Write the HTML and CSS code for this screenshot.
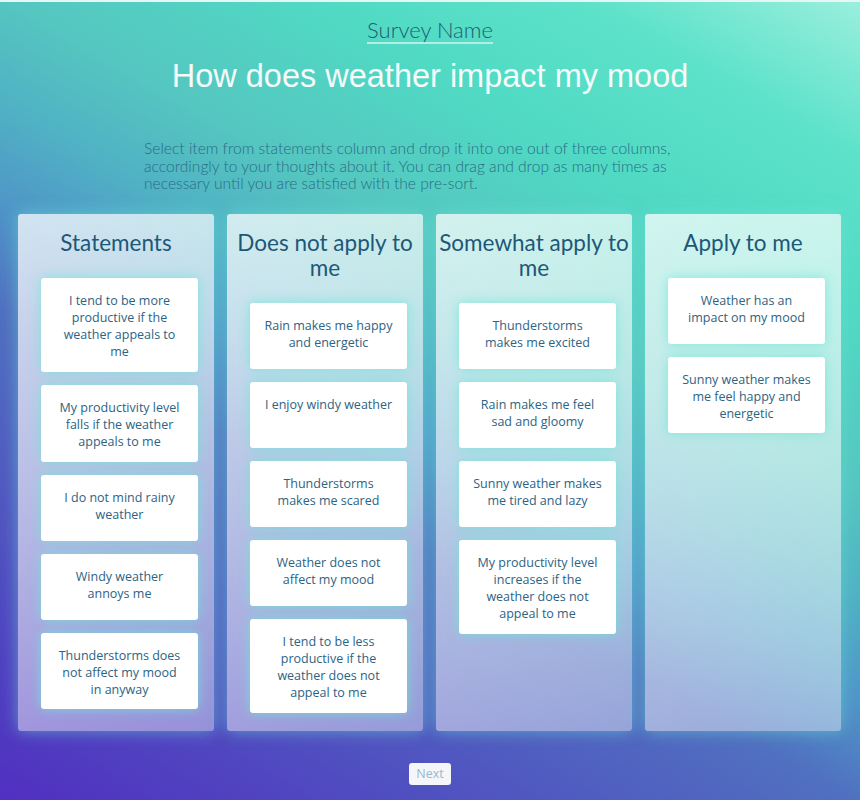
FILE: index.html
```html
<!DOCTYPE html>
<html lang="en">
<head>
<meta charset="utf-8">
<title>How does weather impact my mood</title>
<link rel="stylesheet" href="styles.css">
</head>
<body>
<div class="page">
  <header class="header">
    <div class="survey-row"><span class="survey-name">Survey Name</span></div>
    <h1 class="title">How does weather impact my mood</h1>
    <p class="instructions">Select item from statements column and drop it into one out of three columns, accordingly to your thoughts about it. You can drag and drop as many times as necessary until you are satisfied with the pre-sort.</p>
  </header>
  <main class="board">
    <section class="column">
      <h2 class="col-title">Statements</h2>
      <div class="cards">
        <div class="card">I tend to be more productive if the weather appeals to me</div>
        <div class="card">My productivity level falls if the weather appeals to me</div>
        <div class="card">I do not mind rainy weather</div>
        <div class="card">Windy weather annoys me</div>
        <div class="card">Thunderstorms does not affect my mood in&nbsp;anyway</div>
      </div>
    </section>
    <section class="column">
      <h2 class="col-title">Does not apply to me</h2>
      <div class="cards">
        <div class="card">Rain makes me happy and energetic</div>
        <div class="card">I enjoy windy weather</div>
        <div class="card">Thunderstorms makes me scared</div>
        <div class="card">Weather does not affect my mood</div>
        <div class="card">I tend to be less productive if the weather does not appeal to me</div>
      </div>
    </section>
    <section class="column">
      <h2 class="col-title">Somewhat apply to me</h2>
      <div class="cards">
        <div class="card">Thunderstorms makes me excited</div>
        <div class="card">Rain makes me feel sad and gloomy</div>
        <div class="card">Sunny weather makes me tired and lazy</div>
        <div class="card">My productivity level increases if the weather does not appeal to me</div>
      </div>
    </section>
    <section class="column">
      <h2 class="col-title">Apply to me</h2>
      <div class="cards">
        <div class="card">Weather has an impact on my mood</div>
        <div class="card">Sunny weather makes me feel happy and energetic</div>
      </div>
    </section>
  </main>
  <div class="footer"><button class="next-btn" type="button">Next</button></div>
</div>
</body>
</html>
```
FILE: styles.css
```css
* { box-sizing: border-box; }
html, body { margin: 0; padding: 0; height: 100%; }
body {
  width: 860px;
  height: 800px;
  overflow: hidden;
  border-top: 2px solid #e6f6f4;
  background: linear-gradient(30deg, #5030c0 0%, #5050c0 19%, #5070c0 38%, #4f96c8 46%, #50b2c4 54%, #55c6c0 62%, #50dac4 76%, #5ee2ca 88%, #9aefdd 100%);
  font-family: "Lato", "Open Sans", sans-serif;
}
.page { display: flex; flex-direction: column; }
.header { display: flex; flex-direction: column; align-items: center; padding-top: 16px; }
.survey-row { display: flex; justify-content: center; }
.survey-name {
  font-family: "Lato", sans-serif;
  font-weight: 300;
  font-size: 22px;
  line-height: 24px;
  color: #1f5c70;
  padding-bottom: 0;
  border-bottom: 2px solid #b6ece4;
}
.title {
  margin: 12px 0 0;
  font-family: "Liberation Sans", Arial, sans-serif;
  font-weight: 400;
  font-size: 32.5px;
  line-height: 40px;
  color: #f4fbfa;
}
.instructions {
  align-self: flex-start;
  margin: 44px 0 0 144px;
  width: 545px;
  font-family: "Lato", sans-serif;
  font-weight: 300;
  font-size: 15.6px;
  line-height: 17.5px;
  color: #2a6c84;
}
.board {
  margin-top: 21px;
  padding: 0 19px 0 18px;
  display: grid;
  grid-template-columns: repeat(4, 196px);
  gap: 13px;
}
.column {
  border-radius: 3px;
  padding: 16px 16px 18px 23px;
  background: linear-gradient(150deg, rgba(255,255,255,0.74) 0%, rgba(255,255,255,0.6) 45%, rgba(255,255,255,0.4) 100%);
  box-shadow: 0 0 16px rgba(110, 225, 215, 0.55);
}
.col-title {
  margin: 0 -16px 23px -23px;
  text-align: center;
  font-family: "Lato", sans-serif;
  font-weight: 400;
  font-size: 22.5px;
  line-height: 25px;
  color: #1d5877;
}
.cards { display: flex; flex-direction: column; gap: 13px; }
.card {
  min-height: 66px;
  padding: 14px 13.25px 11px;
  background: #ffffff;
  border-radius: 3px;
  text-align: center;
  font-family: "Open Sans", sans-serif;
  font-size: 12.5px;
  line-height: 17.3px;
  color: #2d6383;
  box-shadow: 0 0 12px rgba(110, 230, 215, 0.8);
}
.footer { display: flex; justify-content: center; margin-top: 32px; }
.next-btn {
  width: 42px;
  height: 22px;
  padding: 0;
  border: none;
  border-radius: 3px;
  background: #f5f6fa;
  font-family: "Open Sans", sans-serif;
  font-size: 12.5px;
  color: #9ab9c9;
}
```
